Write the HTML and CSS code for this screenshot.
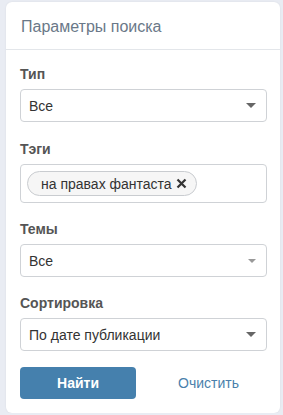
FILE: index.html
```html
<!DOCTYPE html>
<html>
    <head>
        <meta charset="utf-8">
        <link rel="stylesheet" href="styles.css">
    </head>
    <body>
        <div class="panel">
            <div class="panel-head">Параметры поиска</div>
            <form class="panel-body">
                <div class="field">
                    <label class="field-label">Тип</label>
                    <div class="select">
                        <span>Все</span>
                        <span class="caret"></span>
                    </div>
                </div>

                <div class="field tags-field">
                    <label class="field-label">Тэги</label>
                    <div class="tags">
                        <span class="chip">на правах фантаста
                            <svg class="chip-x" width="11" height="11" viewBox="0 0 11 11">
                                <path d="M1.5 1.5 L9.5 9.5 M9.5 1.5 L1.5 9.5" stroke="#333" stroke-width="2.2"/>
                            </svg>
                        </span>
                    </div>
                </div>

                <div class="field">
                    <label class="field-label">Темы</label>
                    <div class="select">
                        <span>Все</span>
                        <span class="caret light"></span>
                    </div>
                </div>

                <div class="field">
                    <label class="field-label">Сортировка</label>
                    <div class="select">
                        <span>По дате публикации</span>
                        <span class="caret"></span>
                    </div>
                </div>

                <div class="actions">
                    <button type="button" class="btn-find">Найти</button>
                    <a href="#" class="btn-clear">Очистить</a>
                </div>
            </form>
        </div>
    </body>
</html>
```

FILE: styles.css
```css
body {
    margin: 0;
    padding: 2px 3px 0 6px;
    background: #e9ecf3;
    font-family: "Liberation Sans", Arial, sans-serif;
    color: #333;
}

.panel {
    background: #fff;
    border-radius: 6px;
    box-shadow: 0 0 2px rgba(0, 0, 0, 0.08);
    height: 411px;
}

.panel-head {
    padding: 16px 15px 13px;
    font-size: 16px;
    color: #6a7888;
    border-bottom: 1px solid #e3e6ea;
}

.panel-body {
    padding: 16px 13px 0 14px;
    display: flex;
    flex-direction: column;
    gap: 18px;
}

.field {
    display: flex;
    flex-direction: column;
    gap: 7px;
}

.tags-field {
    margin-top: 1px;
}

.field-label {
    font-size: 14px;
    font-weight: bold;
    color: #555;
}

.select {
    height: 33px;
    box-sizing: border-box;
    border: 1px solid #cfd2d6;
    border-radius: 4px;
    padding: 0 10px 0 8px;
    display: flex;
    align-items: center;
    justify-content: space-between;
    font-size: 14px;
    color: #333;
}

.caret {
    width: 0;
    height: 0;
    border-left: 5px solid transparent;
    border-right: 5px solid transparent;
    border-top: 5px solid #666;
}

.caret.light {
    border-left-width: 4px;
    border-right-width: 4px;
    border-top: 4px solid #999;
}

.tags {
    height: 39px;
    box-sizing: border-box;
    border: 1px solid #cfd2d6;
    border-radius: 4px;
    padding: 0 6px;
    display: flex;
    align-items: center;
}

.chip {
    height: 25px;
    box-sizing: border-box;
    border: 1px solid #c9ccd0;
    border-radius: 13px;
    background: #f6f6f6;
    padding: 0 9px 0 13px;
    display: flex;
    align-items: center;
    gap: 4px;
    font-size: 14px;
    color: #333;
}

.actions {
    display: flex;
    align-items: center;
    margin-top: -2px;
}

.btn-find {
    width: 116px;
    height: 32px;
    border: none;
    border-radius: 4px;
    background: #4580ad;
    color: #fff;
    font-family: inherit;
    font-size: 14px;
    font-weight: bold;
}

.btn-clear {
    margin-left: 42px;
    color: #4a7fab;
    font-size: 14px;
    text-decoration: none;
}
```
